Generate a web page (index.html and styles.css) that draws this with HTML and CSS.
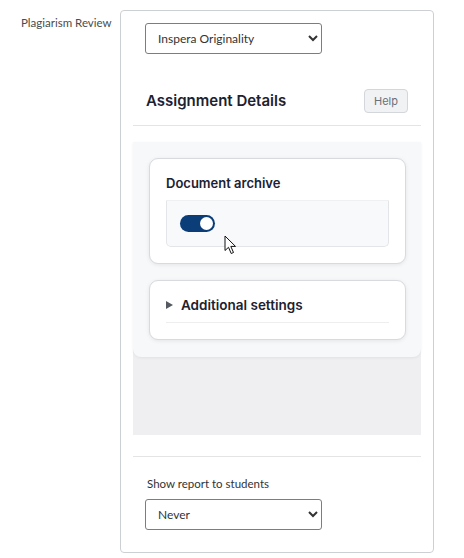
FILE: index.html
```html
<!DOCTYPE html>
<html>
<head>
<meta charset="utf-8">
<link rel="stylesheet" href="styles.css">
</head>
<body>
<div class="row">
  <div class="label">Plagiarism Review</div>
  <div class="card">
    <select class="sel"><option>Inspera Originality</option></select>
    <div class="frame">
      <div class="frame-head">
        <h2>Assignment Details</h2>
        <button class="help">Help</button>
      </div>
      <div class="frame-gap"></div>
      <div class="frame-body">
        <div class="panel">
          <div class="box">
            <div class="box-title">Document archive</div>
            <div class="toggle-area">
              <span class="toggle"><span class="knob"></span></span>
              <svg class="cursor" width="13" height="20" viewBox="0 0 13 20"><path d="M1 1 L1 15.5 L4.5 12.3 L7.2 18.5 L9.5 17.5 L6.8 11.4 L11.5 11.4 Z" fill="#fff" stroke="#111" stroke-width="1" stroke-linejoin="round"/></svg>
            </div>
          </div>
          <div class="box box2">
            <div class="adv"><span class="tri"></span>Additional settings</div>
            <div class="adv-line"></div>
          </div>
        </div>
      </div>
    </div>
    <div class="sep"></div>
    <div class="field-label">Show report to students</div>
    <select class="sel sel2"><option>Never</option></select>
  </div>
</div>
</body>
</html>
```
FILE: styles.css
```css
* { box-sizing: border-box; }
body { margin: 0; background: #fff; font-family: Lato, "Liberation Sans", sans-serif; }
.row { display: flex; padding-top: 10px; }
.label { width: 120px; padding: 6px 0 0 21px; font-size: 11.5px; color: #494c4e; }
.card { width: 314px; height: 543px; border: 1px solid #cdd0d3; border-radius: 4px; padding: 12px 13px 0 12px; display: flex; flex-direction: column; }
.sel { margin-left: 12px; width: 177px; height: 31px; border: 1px solid #7a7e82; border-radius: 3px; background: #fff; font-family: Lato, "Liberation Sans", sans-serif; font-size: 12px; color: #333; padding: 0 8px; }
.frame { margin-top: 22px; width: 288px; display: flex; flex-direction: column; }
.frame-head { height: 50px; border-bottom: 1px solid #e3e4e6; display: flex; align-items: center; justify-content: space-between; padding: 0 13px; }
.frame-head h2 { margin: 0; font-family: Inter, sans-serif; font-weight: 600; font-size: 15px; color: #1c2230; }
.help { width: 44px; height: 24px; background: #f1f2f4; border: 1px solid #d3d6da; border-radius: 4px; font-family: Inter, sans-serif; font-size: 11px; color: #6b7078; padding: 0; }
.frame-gap { height: 16px; }
.frame-body { height: 293px; background: #efeff1; }
.panel { background: #f7f8fa; padding: 16px 15px 17px 16px; border-radius: 0 0 8px 8px; box-shadow: 0 1px 3px rgba(0,0,0,0.06); display: flex; flex-direction: column; gap: 16px; }
.box { background: #fff; border: 1px solid #d8dade; border-radius: 9px; box-shadow: 0 1px 4px rgba(0,0,0,0.08); padding: 16px 16px 16px 16px; }
.box-title { font-family: Inter, sans-serif; font-weight: 600; font-size: 13px; color: #1c2230; height: 26px; border-bottom: 1px solid #eef0f2; }
.toggle-area { position: relative; height: 46px; background: #f7f9fb; border: 1px solid #e3e5e8; border-top: none; border-radius: 0 0 5px 5px; padding: 14px 0 0 13px; }
.toggle { display: block; width: 35px; height: 17px; background: #0b3d78; border-radius: 9px; position: relative; }
.knob { position: absolute; right: 2px; top: 2px; width: 13px; height: 13px; border-radius: 50%; background: #fff; }
.cursor { position: absolute; left: 57px; top: 34px; }
.box2 { padding: 14px 16px 16px 16px; }
.adv { font-family: Inter, sans-serif; font-weight: 600; font-size: 13.5px; color: #1c2230; display: flex; align-items: center; height: 20px; }
.tri { width: 0; height: 0; border-left: 7px solid #555a62; border-top: 4px solid transparent; border-bottom: 4px solid transparent; margin-right: 8px; }
.adv-line { margin-top: 7px; border-top: 1px solid #eceef0; }
.sep { width: 288px; margin-top: 21px; border-top: 1px solid #e3e4e6; }
.field-label { margin: 20px 0 0 14px; font-size: 11.5px; color: #333; }
.sel2 { margin-top: 9px; }
```
